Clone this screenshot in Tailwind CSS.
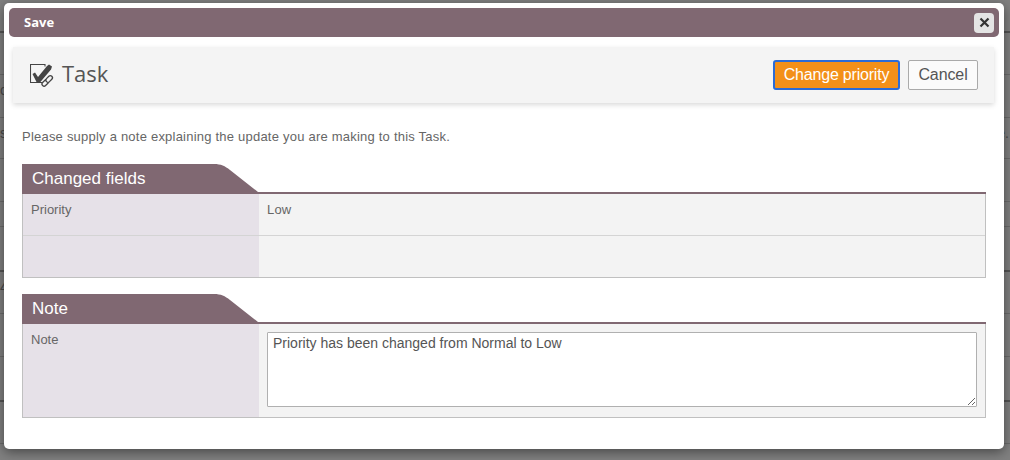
<!DOCTYPE html>
<html lang="en">
<head>
    <meta charset="UTF-8">
    <title>Save</title>
    <script src="https://cdn.jsdelivr.net/npm/@tailwindcss/browser@4"></script>
</head>
<body class="bg-[#808080] overflow-hidden font-['Liberation_Sans',Arial,sans-serif]">
    <div class="relative h-[460px] overflow-hidden">
        <!-- page behind the overlay -->
        <div class="flex flex-col text-[14px] leading-[16px] text-[#4a4a4a]">
            <div class="h-[33px] border-b-2 border-[#555]"></div>
            <div class="h-[42px] border-b border-[#6b6b6b]"></div>
            <div class="h-[43px] border-b border-[#6b6b6b] pt-[7px]"><span>c</span></div>
            <div class="h-[41px] border-b border-[#6b6b6b] pt-[7px] flex justify-between pr-[1px]"><span>s</span><span>e.</span></div>
            <div class="h-[43px] border-b border-[#6b6b6b]"></div>
            <div class="h-[25px] border-b border-[#6b6b6b]"></div>
            <div class="h-[45px] border-b-2 border-[#555]"></div>
            <div class="h-[42px] border-b border-[#6b6b6b] pt-[7px]"><span>4</span></div>
            <div class="h-[43px] border-b border-[#6b6b6b]"></div>
            <div class="h-[45px] border-b-2 border-[#555]"></div>
            <div class="h-[42px] border-b border-[#6b6b6b]"></div>
        </div>

        <!-- dialog -->
        <div class="absolute left-[4px] top-[3px] w-[1000px] h-[446px] bg-white rounded-[5px] pt-[5px] px-[5px] shadow-[0_3px_12px_rgba(0,0,0,0.45)]">
            <div class="h-[29px] bg-[#806872] rounded-[5px] flex items-center justify-between pl-[15px] pr-[5px]">
                <span class="text-[13px] font-bold text-white font-['Open_Sans',sans-serif]">Save</span>
                <button class="w-[20px] h-[20px] bg-[#e4e4e4] rounded-[4px] flex items-center justify-center">
                    <svg width="11" height="11" viewBox="0 0 11 11"><path d="M1.5 1.5L9.5 9.5M9.5 1.5L1.5 9.5" stroke="#333" stroke-width="2.2"/></svg>
                </button>
            </div>

            <div class="mt-[10px] ml-[4px] mr-[5px] h-[56px] bg-[#f4f4f4] shadow-[0_2px_5px_rgba(0,0,0,0.15)] flex items-center justify-between pl-[17px] pr-[16px]">
                <div class="flex items-center gap-[7px]">
                    <svg width="25" height="24" viewBox="0 0 25 24" fill="none">
                        <path d="M15 3.5V1.5H0.5V19.5H13" stroke="#444" stroke-width="1.1"/>
                        <path d="M2.5 11L5 9.5L8 14L17 3L19 1.5L22 3.5L21 6.5L9.5 20H7Z" fill="#444"/>
                        <g transform="rotate(-45 17.5 17.5)" stroke="#444" stroke-width="1.3" fill="#f4f4f4">
                            <rect x="10.5" y="15.5" width="7.5" height="4.2" rx="2.1"/>
                            <rect x="16" y="15.5" width="7.5" height="4.2" rx="2.1"/>
                        </g>
                    </svg>
                    <span class="text-[22px] leading-[30px] -mt-[4px] text-[#555] font-['Open_Sans',sans-serif]">Task</span>
                </div>
                <div class="flex items-center gap-[8px]">
                    <button class="h-[30px] w-[127px] bg-[#f39019] border-2 border-[#2b6bd6] rounded-[3px] text-white text-[16px] tracking-[-0.2px]">Change priority</button>
                    <button class="h-[30px] w-[70px] bg-[#fbfbfb] border border-[#aaa] rounded-[2px] text-[#555] text-[16px] tracking-[-0.1px]">Cancel</button>
                </div>
            </div>

            <p class="mt-[26px] ml-[13px] text-[13px] leading-[16px] tracking-[0.22px] text-[#666]">Please supply a note explaining the update you are making to this Task.</p>

            <!-- changed fields -->
            <div class="mt-[19px] ml-[13px] w-[964px]">
                <div class="relative h-[30px]">
                    <svg class="absolute left-0 top-0" width="240" height="30" viewBox="0 0 240 30"><path d="M0 0H192C199 0 203 2 208 6L236 28H240V30H0Z" fill="#806872"/></svg>
                    <span class="absolute left-[10px] top-[5px] text-[17px] leading-[20px] text-white">Changed fields</span>
                    <div class="absolute left-[236px] right-0 bottom-0 h-[2px] bg-[#806872]"></div>
                </div>
                <div class="border-x border-b border-[#c0c0c0]">
                    <div class="grid grid-cols-[236px_1fr] h-[42px] border-b border-[#d4d4d4]">
                        <div class="bg-[#e6e1e8] pl-[8px] pt-[8px] text-[13px] leading-[16px] text-[#666]">Priority</div>
                        <div class="bg-[#f3f3f3] pl-[8px] pt-[8px] text-[13px] leading-[16px] tracking-[0.2px] text-[#666]">Low</div>
                    </div>
                    <div class="grid grid-cols-[236px_1fr] h-[41px]">
                        <div class="bg-[#e6e1e8]"></div>
                        <div class="bg-[#f3f3f3]"></div>
                    </div>
                </div>
            </div>

            <!-- note -->
            <div class="mt-[16px] ml-[13px] w-[964px]">
                <div class="relative h-[30px]">
                    <svg class="absolute left-0 top-0" width="240" height="30" viewBox="0 0 240 30"><path d="M0 0H192C199 0 203 2 208 6L236 28H240V30H0Z" fill="#806872"/></svg>
                    <span class="absolute left-[10px] top-[5px] text-[17px] leading-[20px] text-white">Note</span>
                    <div class="absolute left-[236px] right-0 bottom-0 h-[2px] bg-[#806872]"></div>
                </div>
                <div class="border-x border-b border-[#c0c0c0]">
                    <div class="grid grid-cols-[236px_1fr] h-[93px]">
                        <div class="bg-[#e6e1e8] pl-[8px] pt-[8px] text-[13px] leading-[16px] text-[#666]">Note</div>
                        <div class="bg-[#f3f3f3] pl-[8px] pr-[8px] pt-[8px]">
                            <textarea class="block w-full h-[75px] bg-white border border-[#b0b0b0] rounded-[1px] px-[5px] py-[2px] text-[14px] leading-[16px] text-[#555]">Priority has been changed from Normal to Low</textarea>
                        </div>
                    </div>
                </div>
            </div>
        </div>
    </div>
</body>
</html>
